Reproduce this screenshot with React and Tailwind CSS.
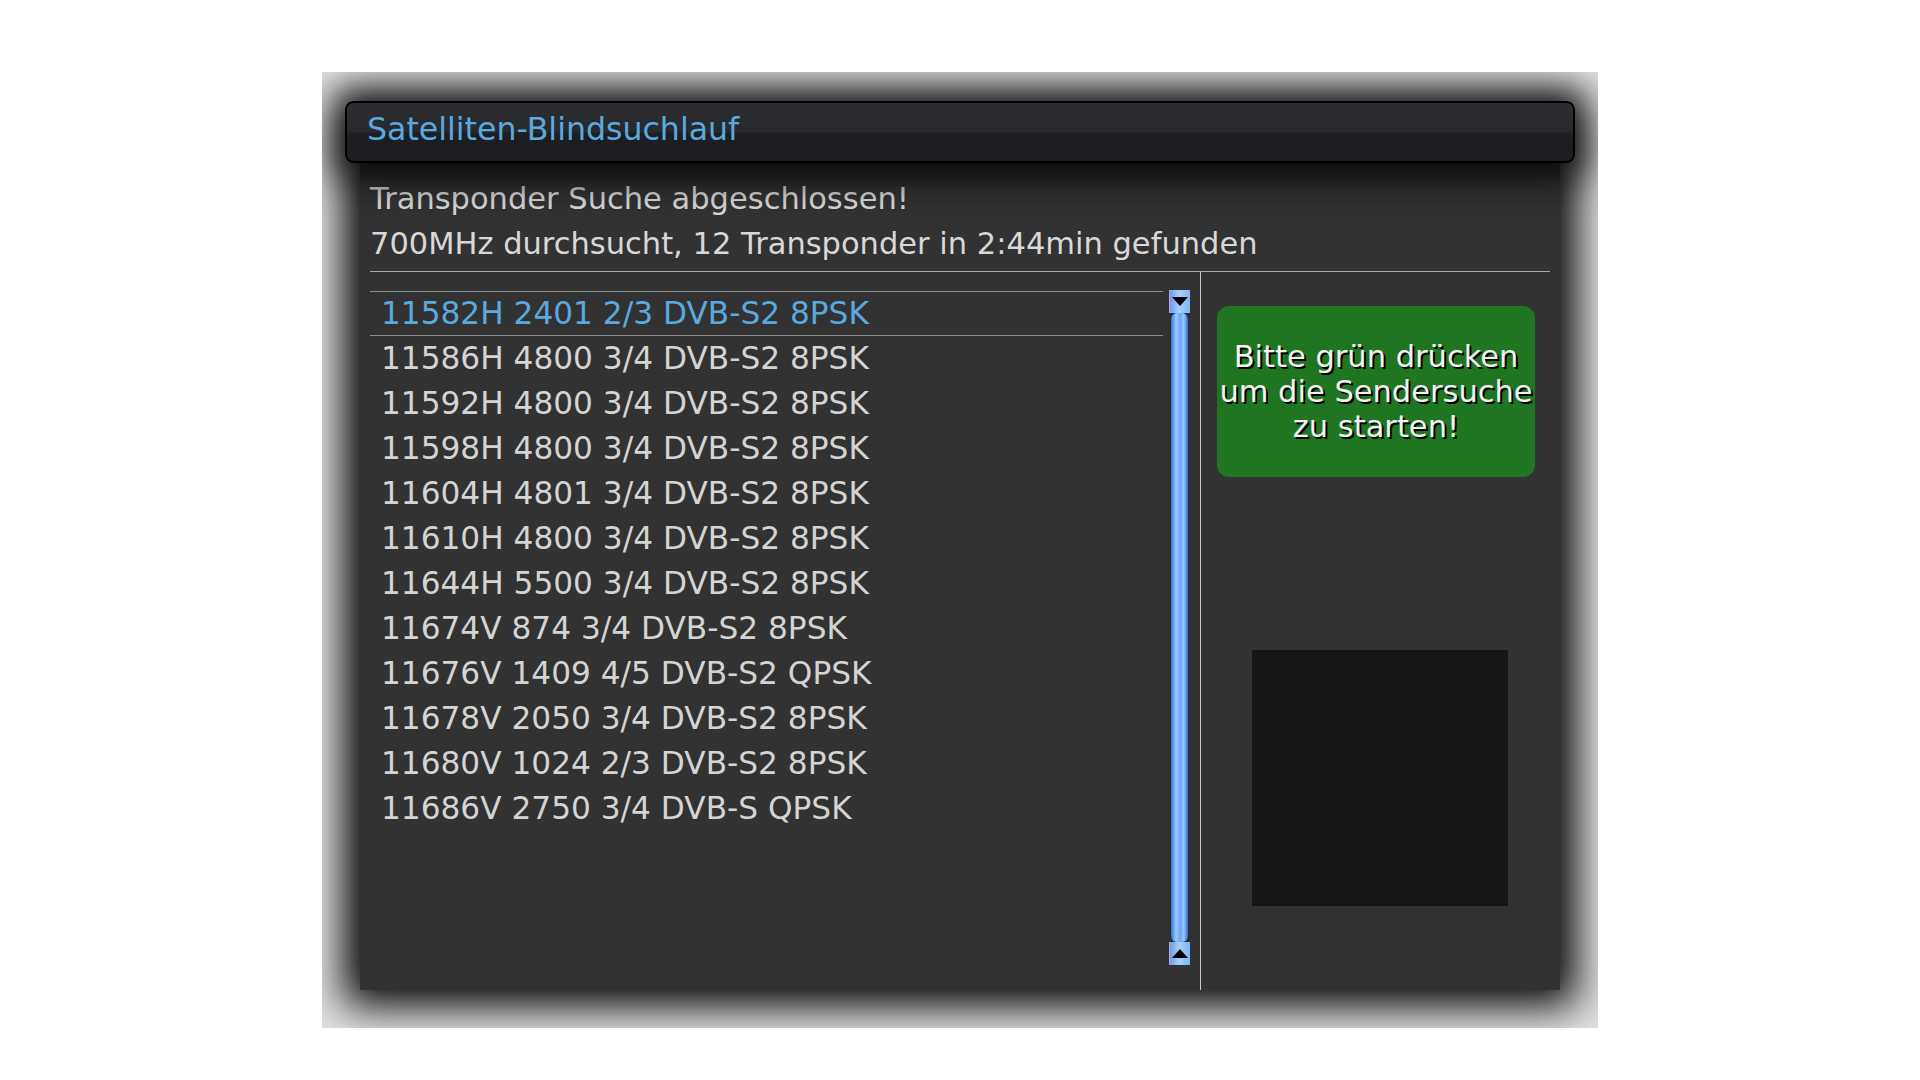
const rows = [
  "11582H 2401 2/3 DVB-S2 8PSK",
  "11586H 4800 3/4 DVB-S2 8PSK",
  "11592H 4800 3/4 DVB-S2 8PSK",
  "11598H 4800 3/4 DVB-S2 8PSK",
  "11604H 4801 3/4 DVB-S2 8PSK",
  "11610H 4800 3/4 DVB-S2 8PSK",
  "11644H 5500 3/4 DVB-S2 8PSK",
  "11674V 874 3/4 DVB-S2 8PSK",
  "11676V 1409 4/5 DVB-S2 QPSK",
  "11678V 2050 3/4 DVB-S2 8PSK",
  "11680V 1024 2/3 DVB-S2 8PSK",
  "11686V 2750 3/4 DVB-S QPSK",
];

function ScrollButton({ up }) {
  return (
    <div className="h-[23px] w-[21px] flex items-center justify-center bg-[linear-gradient(to_right,#6f9fe6,#a9d0fb_45%,#7fb6f2)] border-l border-[#b9a0e8]">
      <svg width="16" height="9" viewBox="0 0 16 9">
        {up ? (
          <polygon points="8,0 16,9 0,9" fill="#000" />
        ) : (
          <polygon points="0,0 16,0 8,9" fill="#000" />
        )}
      </svg>
    </div>
  );
}

function Scrollbar() {
  return (
    <div className="mt-[18px] flex h-[675px] w-[21px] flex-col">
      <ScrollButton />
      <div className="flex flex-1 justify-center bg-[#2e2e2e]">
        <div className="w-[17px] rounded-[6px] bg-[linear-gradient(to_right,#3474d8,#9ccaff_30%,#6aa8f4_55%,#9cc8fa_75%,#2f6cd0)]" />
      </div>
      <ScrollButton up />
    </div>
  );
}

export default function App() {
  return (
    <div className="min-h-screen bg-white pl-[322px] pt-[72px] font-['DejaVu_Sans',sans-serif]">
      <div className="flex h-[956px] w-[1276px] flex-col overflow-hidden bg-[#e4e4e4] pt-[29px]">
        <div className="relative z-10 ml-[23px] h-[62px] w-[1230px] rounded-[8px] border-2 border-black bg-[linear-gradient(to_bottom,#2c2d31_0%,#28292d_50%,#1d1e22_52%,#1c1d21_100%)] pl-[20px] pt-[10px] shadow-[0_0_36px_14px_rgba(0,0,0,0.95)]">
          <div className="text-[31.6px] leading-[32px] text-[#5aa9df]">
            Satelliten-Blindsuchlauf
          </div>
        </div>

        <div className="ml-[38px] flex h-[827px] w-[1200px] flex-col border-t-[7px] border-[#3a3a3a] bg-[#323232] px-[10px] shadow-[0_0_40px_16px_rgba(0,0,0,1)]">
          <div className="pt-[6px] text-[30.5px] leading-[45px] text-[#d8d8d8]">
            <div>Transponder Suche abgeschlossen!</div>
            <div>700MHz durchsucht, 12 Transponder in 2:44min gefunden</div>
          </div>
          <div className="mt-[5px] h-px bg-[#ababab]" />

          <div className="flex flex-1">
            <div className="flex w-[830px] gap-[6px]">
              <div className="w-[793px] pt-[19px] text-[31.2px] text-[#d4d4d4]">
                {rows.map((r, i) =>
                  i === 0 ? (
                    <div
                      key={r}
                      className="h-[45px] border-y border-[#8c8c8c] pl-[11px] leading-[43px] text-[#5aa9df]"
                    >
                      {r}
                    </div>
                  ) : (
                    <div key={r} className="h-[45px] pl-[11px] leading-[45px]">
                      {r}
                    </div>
                  ),
                )}
              </div>
              <Scrollbar />
            </div>
            <div className="w-px bg-[#c8c8c8]" />
            <div className="flex flex-1 flex-col">
              <div className="ml-[16px] mt-[34px] flex h-[171px] w-[318px] items-center justify-center rounded-[12px] bg-[#1f7520] text-center text-[30.5px] leading-[35px] text-[#f2f2f2] [text-shadow:2px_2px_0_#000]">
                <div>
                  Bitte grün drücken
                  <br />
                  um die Sendersuche
                  <br />
                  zu starten!
                </div>
              </div>
              <div className="ml-[51px] mt-[173px] h-[256px] w-[256px] bg-[#161616]" />
            </div>
          </div>
        </div>
      </div>
    </div>
  );
}
